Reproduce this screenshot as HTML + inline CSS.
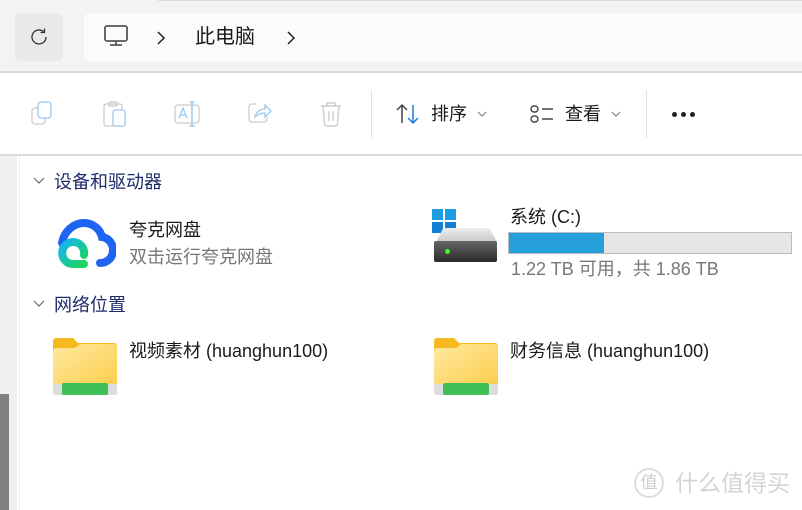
<!DOCTYPE html>
<html><head><meta charset="utf-8"><style>
*{margin:0;padding:0;box-sizing:border-box}
body{width:802px;height:510px;overflow:hidden;background:#fff;font-family:"Liberation Sans","Noto Sans CJK SC",sans-serif;position:relative;color:#1a1a1a}
.a{position:absolute}
.t{font-size:18px;white-space:nowrap;line-height:1}
</style></head><body>
<div class="a" style="left:0;top:0;width:802px;height:72px;background:#f3f3f3"></div>
<div class="a" style="left:158px;top:0;width:644px;height:1px;background:#ddd"></div>
<div class="a" style="left:15px;top:13px;width:48px;height:48px;background:#e9e9e9;border-radius:6px"></div>
<svg class="a" style="left:28px;top:26px" width="22" height="22" viewBox="0 0 22 22"><path d="M18 11A7 7 0 1 1 15.5 5.6" fill="none" stroke="#333" stroke-width="1.3"/><path d="M16.5 2.5v4h-4" fill="none" stroke="#333" stroke-width="1.3"/></svg>
<div class="a" style="left:84px;top:13px;width:730px;height:48px;background:#fbfbfb;border-radius:6px"></div>
<svg class="a" style="left:104px;top:25px" width="24" height="22" viewBox="0 0 24 22"><rect x="1" y="1" width="22" height="15" rx="2" fill="none" stroke="#555" stroke-width="1.8"/><path d="M12 16v4M6 20h12" stroke="#555" stroke-width="1.8"/></svg>
<svg class="a" style="left:156px;top:31px" width="10" height="14" viewBox="0 0 10 14"><path d="M2 1l6 6-6 6" fill="none" stroke="#222" stroke-width="1.5"/></svg>
<div class="a t" style="left:195px;top:27px;font-size:20px">此电脑</div>
<svg class="a" style="left:286px;top:31px" width="10" height="14" viewBox="0 0 10 14"><path d="M2 1l6 6-6 6" fill="none" stroke="#222" stroke-width="1.5"/></svg>
<div class="a" style="left:0;top:71px;width:802px;height:2px;background:#dadada"></div>
<!-- toolbar icons -->
<svg class="a" style="left:30px;top:100px" width="26" height="26" viewBox="0 0 26 26" fill="none" stroke-width="1.3"><rect x="2" y="8" width="13" height="16" rx="3" stroke="#ccc"/><rect x="8" y="2" width="13" height="16" rx="3" stroke="#9cc8ef" fill="#fff"/></svg>
<svg class="a" style="left:102px;top:100px" width="26" height="28" viewBox="0 0 26 28" fill="none" stroke-width="1.3"><rect x="2" y="4" width="18" height="22" rx="2" stroke="#ccc"/><rect x="7" y="2" width="8" height="4" rx="1" stroke="#ccc"/><rect x="11" y="10" width="12" height="16" rx="2" stroke="#9cc8ef" fill="#fff"/></svg>
<svg class="a" style="left:173px;top:100px" width="28" height="28" viewBox="0 0 28 28" fill="none" stroke-width="1.3"><rect x="2" y="5" width="24" height="18" rx="3" stroke="#ccc"/><path d="M6 18l4-10 4 10M7.5 15h5" stroke="#9cc8ef"/><path d="M19 2v24M16.5 2h5M16.5 26h5" stroke="#9cc8ef" stroke-width="1.5"/></svg>
<svg class="a" style="left:246px;top:100px" width="26" height="26" viewBox="0 0 26 26" fill="none" stroke-width="1.3"><path d="M10 4H6a3 3 0 0 0-3 3v12a3 3 0 0 0 3 3h12a3 3 0 0 0 3-3v-2" stroke="#ccc"/><path d="M9 17c1-5 5-8 10-8V5l6 6-6 6v-4c-4 0-7 1-10 4z" stroke="#9cc8ef"/></svg>
<svg class="a" style="left:318px;top:100px" width="26" height="28" viewBox="0 0 26 28" fill="none" stroke="#ccc" stroke-width="1.4"><path d="M3 6h20M9 6V3h8v3M5 6l1.5 18a2 2 0 0 0 2 2h9a2 2 0 0 0 2-2L21 6M11 11v10M15 11v10"/></svg>
<div class="a" style="left:371px;top:90px;width:1px;height:48px;background:#e3e3e3"></div>
<svg class="a" style="left:395px;top:103px" width="26" height="22" viewBox="0 0 26 22" fill="none" stroke-width="1.5"><path d="M7 20V2M2 7l5-5 5 5" stroke="#444"/><path d="M18 2v18M13 15l5 5 5-5" stroke="#1b7fd6"/></svg>
<div class="a t" style="left:431px;top:105px">排序</div>
<svg class="a" style="left:477px;top:111px" width="10" height="6" viewBox="0 0 10 6"><path d="M1 1l4 4 4-4" fill="none" stroke="#777" stroke-width="1"/></svg>
<svg class="a" style="left:529px;top:104px" width="26" height="20" viewBox="0 0 26 20" fill="none" stroke="#444" stroke-width="1.4"><rect x="2" y="2" width="7" height="6" rx="3"/><rect x="2" y="12" width="7" height="6" rx="3"/><path d="M13 5h11M13 15h11"/></svg>
<div class="a t" style="left:565px;top:105px">查看</div>
<svg class="a" style="left:611px;top:111px" width="10" height="6" viewBox="0 0 10 6"><path d="M1 1l4 4 4-4" fill="none" stroke="#777" stroke-width="1"/></svg>
<div class="a" style="left:646px;top:90px;width:1px;height:48px;background:#e3e3e3"></div>
<div class="a" style="left:672px;top:112px;width:5px;height:5px;border-radius:50%;background:#222;box-shadow:9px 0 0 #222,18px 0 0 #222"></div>
<div class="a" style="left:0;top:154px;width:802px;height:2px;background:#dadada"></div>
<!-- left strip -->
<div class="a" style="left:0;top:156px;width:17px;height:354px;background:#f0f0f0"></div>
<div class="a" style="left:0;top:394px;width:9px;height:116px;background:#808080"></div>
<div class="a" style="left:19px;top:156px;width:1px;height:354px;background:#eee"></div>
<!-- sections -->
<svg class="a" style="left:33px;top:177px" width="12" height="8" viewBox="0 0 12 8"><path d="M1 1l5 5 5-5" fill="none" stroke="#666" stroke-width="1.2"/></svg>
<div class="a t" style="left:54px;top:173px;color:#1f2a6b">设备和驱动器</div>
<svg class="a" style="left:54px;top:219px" width="62" height="50" viewBox="0 0 62 50"><defs><linearGradient id="g" x1="0" y1="0" x2="1" y2="1"><stop offset="0" stop-color="#16b4f0"/><stop offset="1" stop-color="#1dd65a"/></linearGradient><linearGradient id="f" x1="0" y1="0" x2="1" y2="1"><stop offset="0" stop-color="#ffe9a0"/><stop offset="1" stop-color="#fbcd4a"/></linearGradient></defs><path d="M8 24C10 12 20 4 30 4c9 0 16 6 18 14 7 1 11 7 11 13 0 8-6 13-13 13" fill="none" stroke="#1f63f2" stroke-width="8" stroke-linecap="round"/><path d="M30 36a11 11 0 1 0-10 9h10" fill="none" stroke="url(#g)" stroke-width="8" stroke-linecap="round"/></svg>
<div class="a t" style="left:129px;top:221px">夸克网盘</div>
<div class="a t" style="left:129px;top:248px;color:#777">双击运行夸克网盘</div>
<!-- drive -->
<div class="a" style="left:432px;top:209px;width:11px;height:11px;background:#1c9de4"></div>
<div class="a" style="left:445px;top:209px;width:11px;height:11px;background:#1c9de4"></div>
<div class="a" style="left:432px;top:222px;width:11px;height:11px;background:#1280d6"></div>
<div class="a" style="left:445px;top:222px;width:11px;height:11px;background:#1280d6"></div>
<div class="a" style="left:436px;top:228px;width:61px;height:14px;background:linear-gradient(#eee,#c8c8c8);clip-path:polygon(12% 0,88% 0,100% 100%,0 100%)"></div>
<div class="a" style="left:434px;top:241px;width:63px;height:21px;background:linear-gradient(#666,#2a2a2a);border-radius:2px"></div>
<div class="a" style="left:445px;top:249px;width:5px;height:5px;border-radius:50%;background:#3f3"></div>
<div class="a t" style="left:510px;top:208px">系统 (C:)</div>
<div class="a" style="left:508px;top:232px;width:284px;height:22px;background:#e6e6e6;border:1px solid #bcbcbc"></div>
<div class="a" style="left:509px;top:233px;width:95px;height:20px;background:#26a0da"></div>
<div class="a t" style="left:511px;top:260px;color:#777">1.22 TB 可用，共 1.86 TB</div>
<svg class="a" style="left:33px;top:300px" width="12" height="8" viewBox="0 0 12 8"><path d="M1 1l5 5 5-5" fill="none" stroke="#666" stroke-width="1.2"/></svg>
<div class="a t" style="left:54px;top:296px;color:#1f2a6b">网络位置</div>
<!-- folders -->
<svg class="a" style="left:53px;top:338px" width="64" height="58" viewBox="0 0 64 58"><path d="M0 3a3 3 0 0 1 3-3h17l5 5h36a3 3 0 0 1 3 3v40H0z" fill="#f6b91f"/><path d="M0 13a3 3 0 0 1 3-3h19l5-4h34a3 3 0 0 1 3 3v40H0z" fill="url(#f)"/><rect x="0" y="46" width="64" height="11" rx="2" fill="#ddd"/><rect x="9" y="45" width="46" height="12" rx="2" fill="#3fbf55"/></svg>
<div class="a t" style="left:129px;top:342px">视频素材 (huanghun100)</div>
<svg class="a" style="left:434px;top:338px" width="64" height="58" viewBox="0 0 64 58"><path d="M0 3a3 3 0 0 1 3-3h17l5 5h36a3 3 0 0 1 3 3v40H0z" fill="#f6b91f"/><path d="M0 13a3 3 0 0 1 3-3h19l5-4h34a3 3 0 0 1 3 3v40H0z" fill="url(#f)"/><rect x="0" y="46" width="64" height="11" rx="2" fill="#ddd"/><rect x="9" y="45" width="46" height="12" rx="2" fill="#3fbf55"/></svg>
<div class="a t" style="left:510px;top:342px">财务信息 (huanghun100)</div>
<!-- watermark -->
<div class="a" style="left:634px;top:468px;width:30px;height:30px;border-radius:50%;border:2px solid #ddd;color:#ccc;font-size:17px;text-align:center;line-height:26px">值</div>
<div class="a t" style="left:675px;top:472px;font-size:23px;color:#d4d4d4">什么值得买</div>
</body></html>
